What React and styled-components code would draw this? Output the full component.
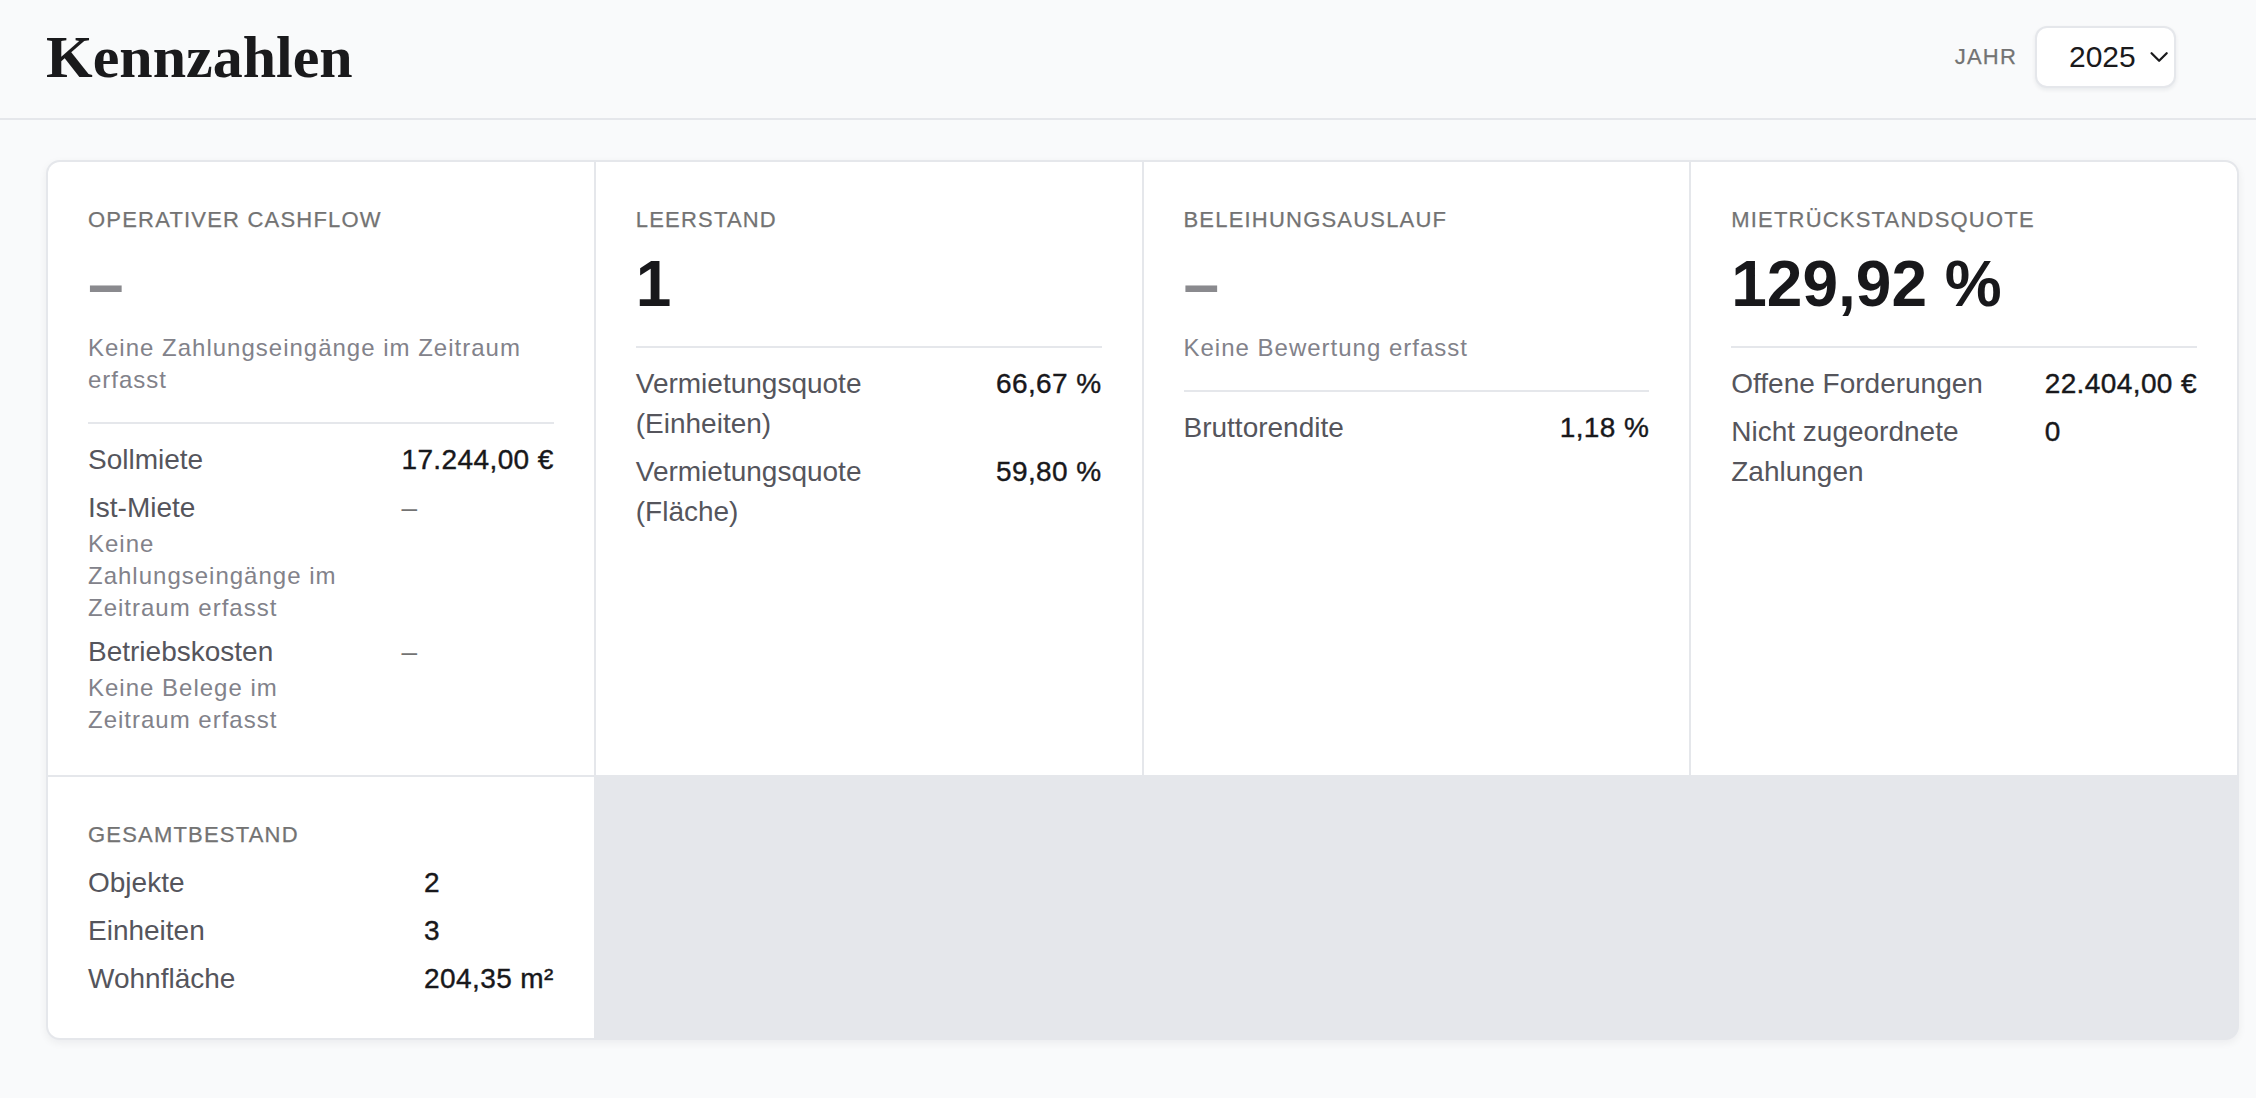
import React from "react";
import styled, { createGlobalStyle } from "styled-components";
import { ChevronDown } from "lucide-react";

const GlobalStyle = createGlobalStyle`
  * {
    box-sizing: border-box;
  }
  html,
  body {
    margin: 0;
    padding: 0;
    background: #f9fafb;
    font-family: "Liberation Sans", Arial, sans-serif;
    color: #18181b;
  }
`;

const Page = styled.div`
  min-height: 1098px;
  background: #f9fafb;
`;

const Header = styled.header`
  height: 120px;
  display: flex;
  align-items: center;
  justify-content: space-between;
  padding: 0 80px 4px 46px;
  border-bottom: 2px solid #e5e7eb;
`;

const Title = styled.h1`
  margin: 0;
  font-family: "Liberation Serif", "Times New Roman", serif;
  font-size: 60px;
  font-weight: 700;
  line-height: 1;
  color: #1a1a1c;
`;

const YearControl = styled.div`
  display: flex;
  align-items: center;
  gap: 18px;
`;

const Eyebrow = styled.div`
  font-size: 22px;
  line-height: 32px;
  letter-spacing: 1.2px;
  text-transform: uppercase;
  color: #737373;
  -webkit-text-stroke: 0.25px #737373;
  margin-bottom: ${(p) => (p.$tight ? "0" : "12px")};
`;

const YearSelect = styled.button`
  display: flex;
  align-items: center;
  gap: 8px;
  height: 62px;
  width: 141px;
  padding: 0 0 0 32px;
  background: #ffffff;
  border: 2px solid #e5e7eb;
  border-radius: 12px;
  box-shadow: 0 2px 4px rgba(17, 24, 39, 0.07);
  font-family: "Liberation Sans", Arial, sans-serif;
  font-size: 30px;
  color: #1a1a1c;
  cursor: pointer;
`;

const Main = styled.main`
  padding: 40px 17px 40px 46px;
`;

const Card = styled.section`
  display: grid;
  grid-template-columns: repeat(4, 1fr);
  gap: 2px;
  background: #e5e7eb;
  border: 2px solid #e5e7eb;
  border-radius: 14px;
  overflow: hidden;
  box-shadow: 0 3px 8px rgba(17, 24, 39, 0.06);
`;

const Cell = styled.div`
  background: #ffffff;
  padding: 42px 40px 39px;
  min-width: 0;
`;

const BigValue = styled.div`
  font-size: 64px;
  line-height: 72px;
  font-weight: 700;
  color: ${(p) => (p.$muted ? "#8a8a8e" : "#18181b")};
`;

const Note = styled.div`
  margin-top: 12px;
  font-size: 24px;
  line-height: 32px;
  letter-spacing: 1px;
  color: #82828a;
`;

const Divider = styled.hr`
  margin: 26px 0 16px;
  border: 0;
  height: 2px;
  background: #e5e7eb;
`;

const Rows = styled.div`
  display: grid;
  grid-template-columns: 1fr auto;
  column-gap: 32px;
  row-gap: 8px;
`;

const RowLabel = styled.div`
  min-width: 0;
`;

const RowName = styled.div`
  font-size: 28px;
  line-height: 40px;
  color: #55555c;
`;

const RowNote = styled.div`
  font-size: 24px;
  line-height: 32px;
  letter-spacing: 1px;
  color: #82828a;
`;

const RowValue = styled.div`
  font-size: 28px;
  line-height: 40px;
  letter-spacing: 0.4px;
  white-space: nowrap;
  color: ${(p) => (p.$muted ? "#737373" : "#18181b")};
  -webkit-text-stroke: ${(p) => (p.$muted ? "0" : "0.4px #18181b")};
`;

const kpis = [
  {
    label: "Operativer Cashflow",
    value: "–",
    muted: true,
    note: "Keine Zahlungseingänge im Zeitraum erfasst",
    rows: [
      { name: "Sollmiete", value: "17.244,00 €" },
      {
        name: "Ist-Miete",
        value: "–",
        muted: true,
        note: "Keine Zahlungseingänge im Zeitraum erfasst",
      },
      {
        name: "Betriebskosten",
        value: "–",
        muted: true,
        note: "Keine Belege im Zeitraum erfasst",
      },
    ],
  },
  {
    label: "Leerstand",
    value: "1",
    rows: [
      { name: "Vermietungsquote (Einheiten)", value: "66,67 %" },
      { name: "Vermietungsquote (Fläche)", value: "59,80 %" },
    ],
  },
  {
    label: "Beleihungsauslauf",
    value: "–",
    muted: true,
    note: "Keine Bewertung erfasst",
    rows: [{ name: "Bruttorendite", value: "1,18 %" }],
  },
  {
    label: "Mietrückstandsquote",
    value: "129,92 %",
    rows: [
      { name: "Offene Forderungen", value: "22.404,00 €" },
      { name: "Nicht zugeordnete Zahlungen", value: "0" },
    ],
  },
];

const bestand = [
  { name: "Objekte", value: "2" },
  { name: "Einheiten", value: "3" },
  { name: "Wohnfläche", value: "204,35 m²" },
];

const RowList = ({ rows }) => (
  <Rows>
    {rows.map((row) => (
      <React.Fragment key={row.name}>
        <RowLabel>
          <RowName>{row.name}</RowName>
          {row.note && <RowNote>{row.note}</RowNote>}
        </RowLabel>
        <RowValue $muted={row.muted}>{row.value}</RowValue>
      </React.Fragment>
    ))}
  </Rows>
);

const KpiCell = ({ kpi }) => (
  <Cell>
    <Eyebrow>{kpi.label}</Eyebrow>
    <BigValue $muted={kpi.muted}>{kpi.value}</BigValue>
    {kpi.note && <Note>{kpi.note}</Note>}
    <Divider />
    <RowList rows={kpi.rows} />
  </Cell>
);

export default function App() {
  return (
    <Page>
      <GlobalStyle />
      <Header>
        <Title>Kennzahlen</Title>
        <YearControl>
          <Eyebrow $tight>Jahr</Eyebrow>
          <YearSelect type="button">
            <span>2025</span>
            <ChevronDown size={32} strokeWidth={1.8} color="#1a1a1c" />
          </YearSelect>
        </YearControl>
      </Header>
      <Main>
        <Card>
          {kpis.map((kpi) => (
            <KpiCell key={kpi.label} kpi={kpi} />
          ))}
          <Cell>
            <Eyebrow>Gesamtbestand</Eyebrow>
            <RowList rows={bestand} />
          </Cell>
        </Card>
      </Main>
    </Page>
  );
}
